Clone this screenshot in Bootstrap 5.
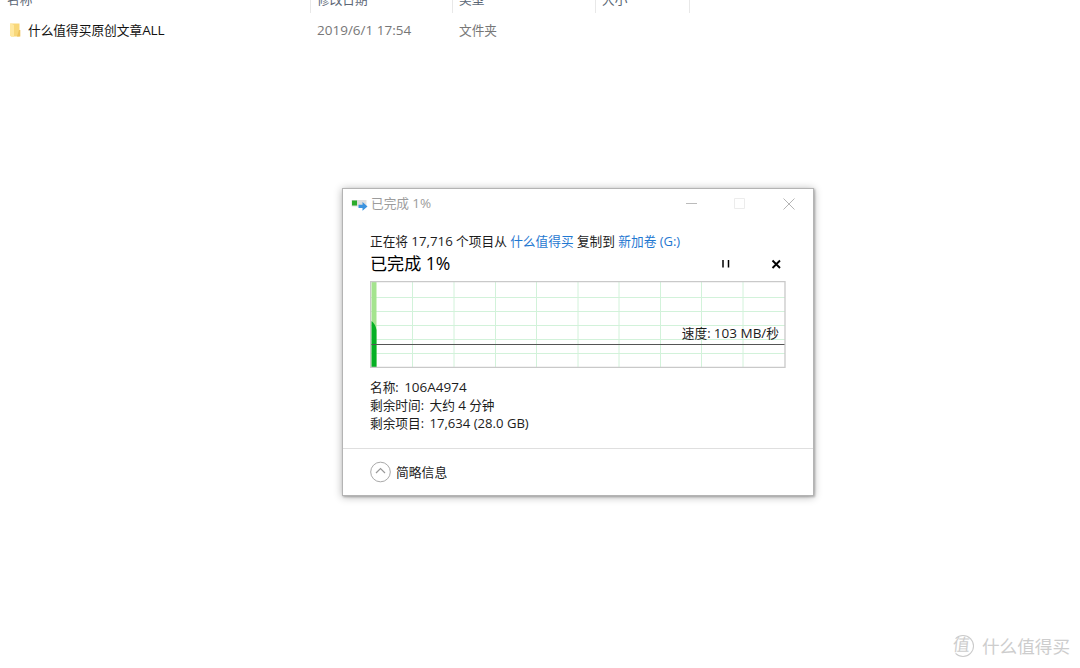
<!DOCTYPE html>
<html lang="zh-CN">
<head>
<meta charset="utf-8">
<meta name="viewport" content="width=device-width, initial-scale=1">
<title>已完成 1%</title>
<link href="https://cdn.jsdelivr.net/npm/bootstrap@5.3.0/dist/css/bootstrap.min.css" rel="stylesheet">
<style>
body{width:1080px;height:668px;background:#fff;color:#1c1c1c;font-family:"Open Sans","Noto Sans CJK SC",sans-serif;font-size:12.7px;line-height:18px;white-space:nowrap}
.heads{height:13px}
.heads>div{border-right:1px solid #e8e8e8;color:#5b6675;padding-left:6px;line-height:18px;height:13px}
.heads>.c1{padding-left:7px}
.heads span{display:block;margin-top:-10px}
.c1{width:311px}.c2{width:142px}.c3{width:143px}.c4{width:94px}
.file-row{height:34px;color:#777}
.fname{color:#111}
.en{font-size:13.5px;line-height:1}
.copy-win{left:342px;top:188px;width:472px;height:308px;border:1px solid #b4b4b4;box-shadow:0 1px 8px rgba(0,0,0,.3),1px 1px 2px rgba(0,0,0,.25);background:#fff}
.title-row{height:30px;color:#9c9c9c;padding-left:8px}
.title-row .t-title{margin-left:2px;margin-top:-2px}
.main-part{height:229px;padding:13px 28px 0 27px}
.main-part a{color:#1f78d1}
.heading-line{font-size:17.1px;line-height:24px;height:24px;margin-top:2px;color:#000}
.heading-line .en{font-size:17.6px}
.graph{width:416px;height:87px;margin-top:5px}
.speed{right:7px;top:43px}
.info{margin-top:10px;line-height:18.2px}
.foot{height:47px;border-top:1px solid #dfdfdf;padding-left:27px}
.foot span{margin-left:5px;font-size:12.8px}
.mark-row{right:10px;bottom:10px;color:#cdcdcd;font-size:17.6px;line-height:24px}
.seal{width:22px;height:22px;border:1px solid #cacaca;border-left-color:transparent;font-size:17px;line-height:20px}
.seal span{transform:translate(-2px,-1px) skewX(-6deg)}
</style>
</head>
<body class="position-relative overflow-hidden">
<div class="heads d-flex overflow-hidden">
  <div class="c1"><span>名称</span></div><div class="c2"><span>修改日期</span></div><div class="c3"><span>类型</span></div><div class="c4"><span>大小</span></div>
</div>
<div class="file-row d-flex align-items-center">
  <div class="c1 d-flex align-items-center fname">
    <svg class="ms-2" width="20" height="16" viewBox="0 0 20 16"><path d="M3 1.500h8.500v13H3z" fill="#f8d779"/><path d="M2 1l4 2v12l-4-1z" fill="#ffe8a0"/><path d="M11 8h1.300v6.500H9z" fill="#eec35c"/></svg>
    <span>什么值得买原创文章<span class="en" style="letter-spacing:-.1px">ALL</span></span>
  </div>
  <div class="c2" style="padding-left:6px"><span class="en">2019/6/1 17:54</span></div>
  <div class="c3" style="padding-left:6px">文件夹</div>
</div>

<section class="copy-win position-absolute">
  <div class="title-row d-flex align-items-center">
    <svg width="18" height="14" viewBox="0 0 18 14"><path d="M.5 3h15v6.500H.5z" fill="#dedede"/><path d="M1 3.500h5v5H1z" fill="#2cac2c"/><path d="M7.500 7.700h4V5l5 4.500-5 4.300v-2.700h-4z" fill="#3c93df"/></svg>
    <span class="t-title">已完成 <span class="en">1%</span></span>
    <svg class="ms-auto" width="129" height="14" viewBox="0 0 129 14" fill="none"><path d="M2 6.500h11" stroke="#bbb"/><path d="M50.500 1.500h10v10h-10z" stroke="#ececec"/><path d="M99.500 1.500l11 11M110.500 1.500l-11 11" stroke="#b5b5b5"/></svg>
  </div>
  <div class="main-part">
    <div>正在将 <span class="en" style="font-size:13.300px">17,716</span> 个项目从 <a class="text-decoration-none" href="#">什么值得买</a> 复制到 <a class="text-decoration-none" href="#">新加卷 <span class="en" style="font-size:13px">(G:)</span></a></div>
    <div class="heading-line d-flex align-items-center">
      <span>已完成 <span class="en">1%</span></span>
      <svg class="ms-auto" width="65" height="12" viewBox="0 0 65 12" fill="none" stroke="#000"><path d="M3 2v7.500M8.500 2v7.500" stroke-width="1.500"/><path d="M52.500 2.500l7.500 7.500M60 2.500L52.500 10" stroke-width="1.900"/></svg>
    </div>
    <div class="graph position-relative">
      <svg class="d-block" width="416" height="87" viewBox="0 0 416 87" fill="none">
        <path d="M42.500 1v85M84 1v85M125.500 1v85M166.500 1v85M208 1v85M249 1v85M290.500 1v85M331.500 1v85M373 1v85M1 16.500h414M1 30.500h414M1 44.500h414M1 58.500h414M1 72.500h414" stroke="#d2f2da"/>
        <path d="M1.500 1h5v85h-5z" fill="#a5e48f"/>
        <path d="M1.500 40q4 3 5 9v37h-5z" fill="#06b025"/>
        <path d="M.5.500h414.500v86H.5z" stroke="#c9c9c9" stroke-width="1.300"/>
        <path d="M1.500 63.500h413" stroke="#555"/>
      </svg>
      <span class="speed position-absolute">速度: <span class="en">103 MB/</span>秒</span>
    </div>
    <div class="info"><div>名称: &thinsp;<span class="en">106A4974</span></div><div>剩余时间: &thinsp;大约 <span class="en">4</span> 分钟</div><div>剩余项目: &thinsp;<span class="en" style="font-size:13.100px">17,634 (28.0 GB)</span></div></div>
  </div>
  <div class="foot d-flex align-items-center">
    <svg width="21" height="22" viewBox="0 0 21 22" fill="none"><circle cx="10.500" cy="11" r="9.800" stroke="#a9a9a9"/><path d="M6 12l4.500-4.500L15 12" stroke="#999" stroke-width="1.200"/></svg>
    <span>简略信息</span>
  </div>
</section>

<div class="mark-row position-absolute d-flex align-items-center gap-2">
  <span class="seal rounded-circle d-flex justify-content-center align-items-center"><span>值</span></span><span>什么值得买</span>
</div>
<script src="https://cdn.jsdelivr.net/npm/bootstrap@5.3.0/dist/js/bootstrap.bundle.min.js"></script>
</body>
</html>
